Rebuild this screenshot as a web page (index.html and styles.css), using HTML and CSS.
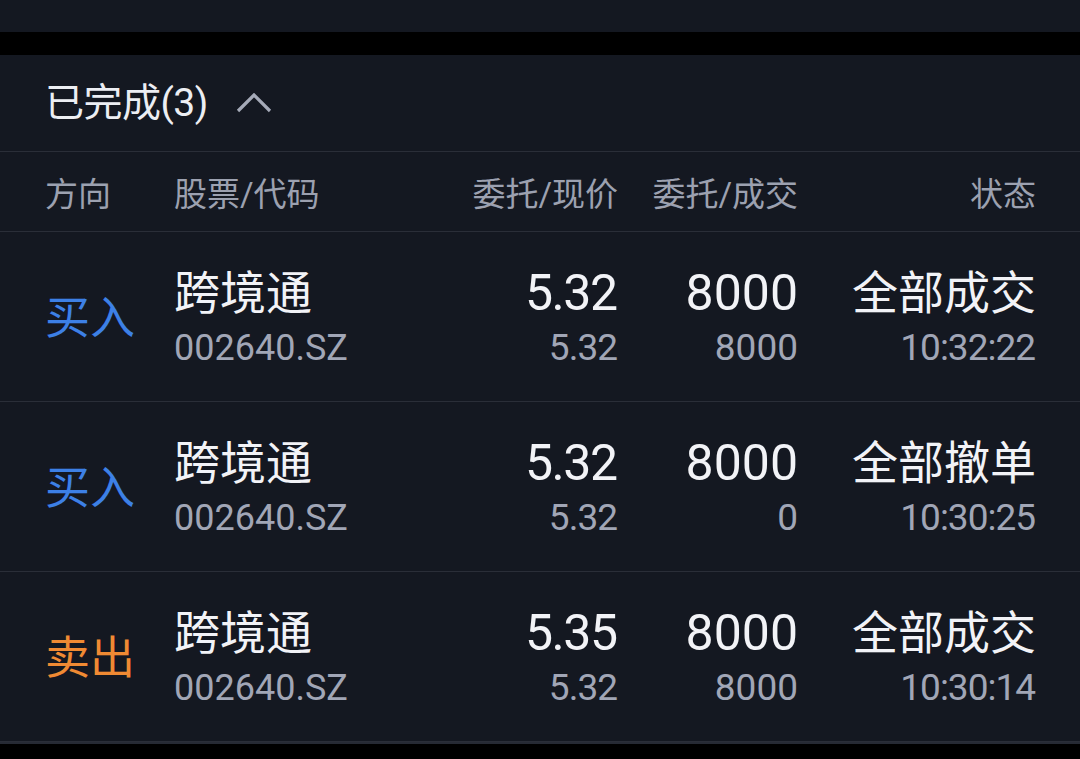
FILE: index.html
```html
<!DOCTYPE html>
<html lang="zh-CN">
<head>
<meta charset="utf-8">
<link rel="stylesheet" href="styles.css">
</head>
<body>
<div class="top-panel"></div>
<div class="gap"></div>
<section class="card">
  <div class="card-head">
    <span class="card-title">已完成(3)</span>
    <svg class="chev" width="36" height="20" viewBox="0 0 36 20"><path d="M2 18 L18 2 L34 18" fill="none" stroke="#a5aab8" stroke-width="3.2"/></svg>
  </div>
  <div class="grid head-row">
    <div>方向</div>
    <div>股票/代码</div>
    <div class="r">委托/现价</div>
    <div class="r">委托/成交</div>
    <div class="r">状态</div>
  </div>
  <div class="grid row">
    <div class="dir buy">买入</div>
    <div class="cell"><span class="main">跨境通</span><span class="sub code">002640.SZ</span></div>
    <div class="cell r"><span class="main num price">5.32</span><span class="sub price">5.32</span></div>
    <div class="cell r"><span class="main num">8000</span><span class="sub">8000</span></div>
    <div class="cell r"><span class="main">全部成交</span><span class="sub time">10:32:22</span></div>
  </div>
  <div class="grid row">
    <div class="dir buy">买入</div>
    <div class="cell"><span class="main">跨境通</span><span class="sub code">002640.SZ</span></div>
    <div class="cell r"><span class="main num price">5.32</span><span class="sub price">5.32</span></div>
    <div class="cell r"><span class="main num">8000</span><span class="sub">0</span></div>
    <div class="cell r"><span class="main">全部撤单</span><span class="sub time">10:30:25</span></div>
  </div>
  <div class="grid row">
    <div class="dir sell">卖出</div>
    <div class="cell"><span class="main">跨境通</span><span class="sub code">002640.SZ</span></div>
    <div class="cell r"><span class="main num price">5.35</span><span class="sub price">5.32</span></div>
    <div class="cell r"><span class="main num">8000</span><span class="sub">8000</span></div>
    <div class="cell r"><span class="main">全部成交</span><span class="sub time">10:30:14</span></div>
  </div>
</section>
</body>
</html>
```
FILE: styles.css
```css
html, body {
  margin: 0;
  padding: 0;
  background: #000;
  font-family: Roboto, "Noto Sans CJK SC", sans-serif;
  height: 759px;
  overflow: hidden;
}
.top-panel {
  height: 32px;
  background: #141821;
}
.gap {
  height: 23px;
  background: #000;
}
.card {
  background: #141821;
  border-bottom: 2px solid #262a34;
}
.card-head {
  height: 97px;
  display: flex;
  align-items: center;
  padding-left: 45px;
  border-bottom: 1px solid #2a2e38;
  box-sizing: border-box;
}
.card-title {
  color: #eceef3;
  font-size: 39px;
  line-height: 40px;
  letter-spacing: -0.5px;
}
.chev {
  margin-left: 28px;
  margin-top: 0;
}
.grid {
  display: grid;
  grid-template-columns: 129px 200px 244px 180px 238px;
  padding: 0 44px 0 45px;
  border-bottom: 1px solid #2a2e38;
  align-items: center;
}
.r {
  text-align: right;
}
.head-row {
  height: 80px;
  box-sizing: border-box;
  color: #9ca1b0;
  font-size: 33px;
  padding-top: 0;
}
.row {
  height: 170px;
  box-sizing: border-box;
  padding-top: 5px;
}
.dir {
  font-size: 45px;
  line-height: 50px;
  padding-top: 0;
}
.buy { color: #3d80e6; }
.sell { color: #f08a33; }
.cell {
  display: flex;
  flex-direction: column;
}
.cell.r { align-items: flex-end; }
.main {
  color: #f2f3f7;
  font-size: 46px;
  line-height: 58px;
}
.main.num {
  font-size: 50px;
}
.sub {
  color: #a1a6b6;
  font-size: 37px;
  line-height: 52px;
}
.sub.code {
  font-size: 36px;
}
.price {
  letter-spacing: -1.5px;
  margin-right: 1.5px;
}
.sub.price {
  letter-spacing: -1px;
  margin-right: 1px;
}
.time {
  letter-spacing: -1px;
  margin-right: 1px;
}
```
